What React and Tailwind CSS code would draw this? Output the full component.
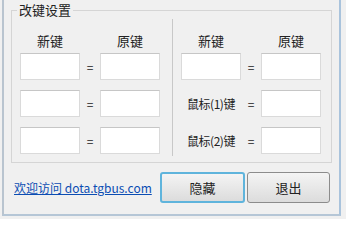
import React from 'react';

const font = { fontFamily: '"Noto Sans CJK SC", "Liberation Sans", sans-serif' };

function KeyBox() {
  return <div className="h-[27px] w-[60px] border border-[#dadada] border-t-[#c6c6c6] bg-white" />;
}

function Eq() {
  return <div className="w-[20px] text-center text-[12px] leading-none text-[#222]">=</div>;
}

function Row({ label }) {
  return (
    <div className="flex items-center">
      {label ? (
        <div className="flex h-[27px] w-[60px] items-center justify-center text-[12px] tracking-[-0.5px] text-[#222]">{label}</div>
      ) : (
        <KeyBox />
      )}
      <Eq />
      <KeyBox />
    </div>
  );
}

function Column({ labels }) {
  return (
    <div className="flex flex-col">
      <div className="flex h-[19px] items-start text-[13px] leading-none text-[#222]">
        <div className="w-[60px] text-center">新键</div>
        <div className="w-[20px]" />
        <div className="w-[60px] text-center">原键</div>
      </div>
      <div className="flex flex-col gap-[10px]">
        {labels.map((l, i) => (
          <Row key={i} label={l} />
        ))}
      </div>
    </div>
  );
}

export default function App() {
  return (
    <div className="h-[219px] w-[346px] bg-[#f0f0f0]" style={font}>
      <div className="ml-[2px] h-[216px] w-[339px] border-x-[2px] border-b-[2px] border-l-[#b9c4cf] border-r-[#a9c3dc] border-b-[#b5c6d6] px-[7px] pt-[10px]">
        <div className="relative h-[153px] w-[321px] border border-[#d5d5d5] pl-[8px] pr-[10px] pt-[23px]">
          <div className="absolute -top-[9px] left-[5px] bg-[#f0f0f0] px-[2px] text-[13px] leading-[16px] text-[#222]">改键设置</div>
          <div className="flex">
            <Column labels={[null, null, null]} />
            <div className="ml-[12px] mr-[8px] mt-[-15px] h-[137px] w-px bg-[#c8c8c8]" />
            <Column labels={[null, '鼠标(1)键', '鼠标(2)键']} />
          </div>
        </div>
        <div className="mt-[9px] flex items-center">
          <a href="#" className="w-[149px] pl-[3px] text-[12px] text-[#0b4db3] underline">欢迎访问 dota.tgbus.com</a>
          <div className="flex gap-[2px]">
            <button className="h-[31px] w-[85px] rounded-[3px] border-2 border-[#5fb4dc] bg-gradient-to-b from-[#f4f4f4] to-[#dcdcdc] text-[13px] text-[#222]">隐藏</button>
            <button className="h-[31px] w-[83px] rounded-[3px] border border-[#8c8c8c] bg-gradient-to-b from-[#f4f4f4] to-[#dcdcdc] text-[13px] text-[#222]">退出</button>
          </div>
        </div>
      </div>
    </div>
  );
}
